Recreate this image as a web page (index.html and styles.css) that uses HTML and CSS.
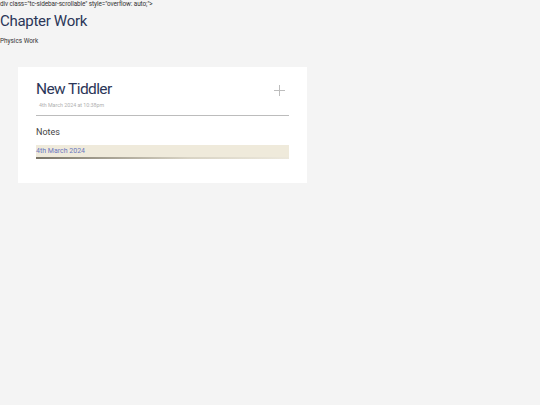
FILE: index.html
```html
<!DOCTYPE html>
<html>
<head>
<meta charset="utf-8">
<link rel="stylesheet" href="styles.css">
</head>
<body>
<div class="stray">div class="tc-sidebar-scrollable" style="overflow: auto;"&gt;</div>
<h1 class="chapter">Chapter Work</h1>
<div class="sub">Physics Work</div>
<div class="card">
  <div class="head">
    <div class="titles">
      <h2 class="title">New Tiddler</h2>
      <div class="date">4th March 2024 at 10:38pm</div>
    </div>
    <svg class="plus" width="11" height="11" viewBox="0 0 11 11"><path d="M5.5 0V11M0 5.5H11" stroke="#bdbdbd" stroke-width="1"/></svg>
  </div>
  <div class="notes">Notes</div>
  <div class="hl"><span>4th March 2024</span></div>
</div>
</body>
</html>
```
FILE: styles.css
```css
html, body { margin: 0; padding: 0; }
body {
  background: #f4f4f4;
  font-family: Roboto, "Noto Sans", sans-serif;
  width: 540px; height: 405px;
}
.stray { font-size: 6.4px; color: #333; line-height: 8px; letter-spacing: -0.08px; }
.chapter {
  margin: 4px 0 0 0; font-size: 15px; font-weight: 400; color: #2b3658;
  line-height: 18px; letter-spacing: -0.3px;
}
.sub { font-size: 6.4px; color: #333; margin-top: 7px; line-height: 8px; }
.card {
  background: #fff; margin: 22px 0 0 18px; width: 253px; padding: 10px 18px 26px 18px;
}
.head { display: flex; align-items: flex-start; justify-content: space-between; border-bottom: 1px solid #bcbcbc; padding-bottom: 7px; }
.title { margin: 2px 0 0 0; font-size: 15.5px; font-weight: 400; color: #2b3658; line-height: 20px; letter-spacing: -0.6px; }
.date { font-size: 5.3px; color: #b0b0b0; margin: 3px 0 0 3px; line-height: 6px; }
.plus { margin: 8px 4px 0 0; }
.notes { font-size: 9px; color: #444; margin-top: 10px; line-height: 12px; }
.hl {
  margin-top: 7px; background: #efeadb; height: 12px; position: relative;
  font-size: 7px; color: #6c77bd; line-height: 12px;
}
.hl::after {
  content: ""; position: absolute; left: 0; right: 0; bottom: -2px; height: 2px;
  background: linear-gradient(to right, #7a7567, #d8d3c4 60%, #ece8dc);
}
```
